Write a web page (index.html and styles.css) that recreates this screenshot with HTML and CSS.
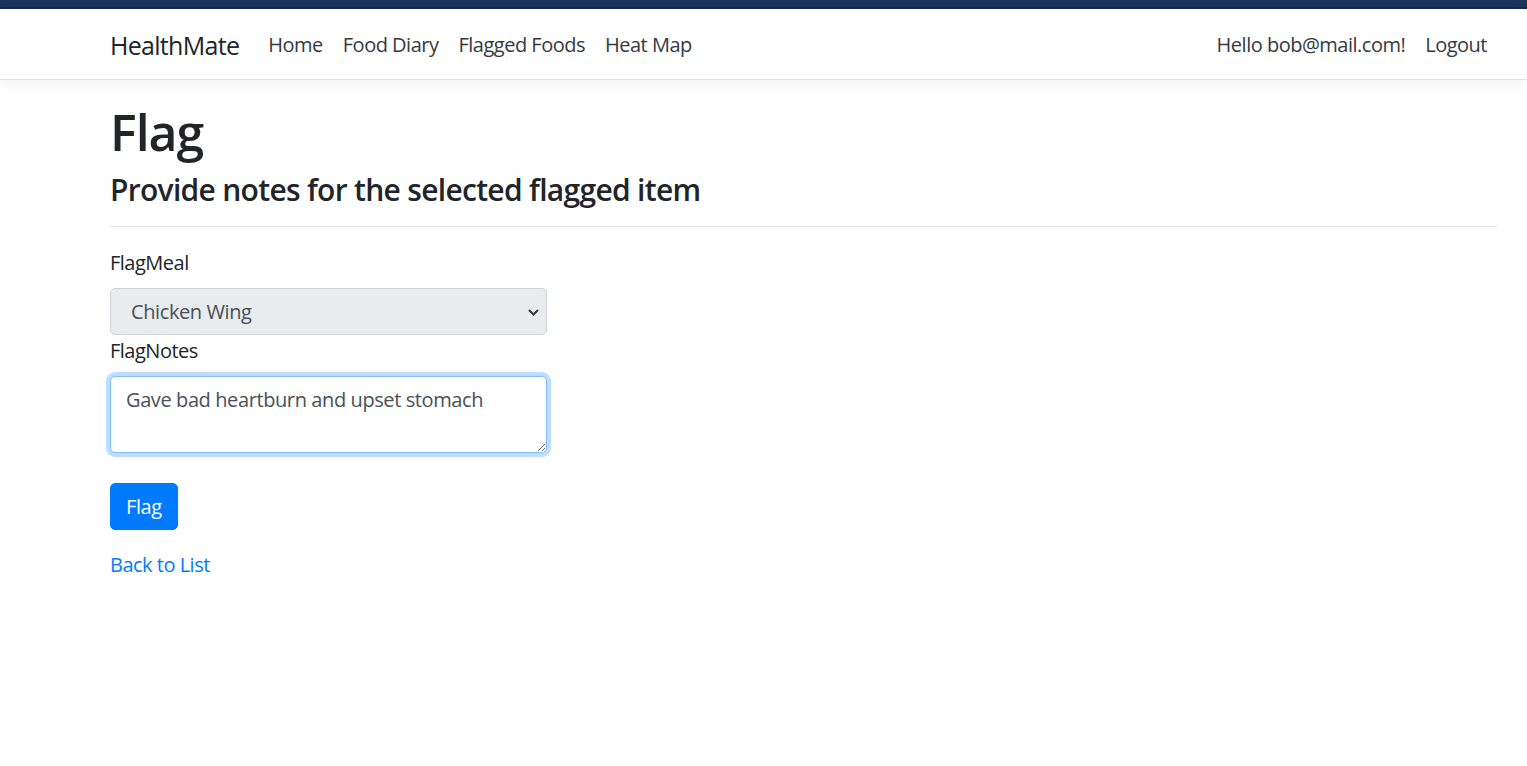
FILE: index.html
```html
<!DOCTYPE html>
<html lang="en">
<head>
<meta charset="utf-8">
<title>Flag - HealthMate</title>
<link rel="stylesheet" href="styles.css">
</head>
<body>
<div class="topbar"></div>
<header class="navbar">
  <div class="container nav-inner">
    <a class="brand" href="#">HealthMate</a>
    <ul class="nav nav-left">
      <li><a class="nav-link" href="#">Home</a></li>
      <li><a class="nav-link" href="#">Food Diary</a></li>
      <li><a class="nav-link" href="#">Flagged Foods</a></li>
      <li><a class="nav-link" href="#">Heat Map</a></li>
    </ul>
    <ul class="nav nav-right">
      <li><a class="nav-link" href="#">Hello bob@mail.com!</a></li>
      <li><a class="nav-link" href="#">Logout</a></li>
    </ul>
  </div>
</header>
<main class="container main">
  <h1 class="title">Flag</h1>
  <h4 class="subtitle">Provide notes for the selected flagged item</h4>
  <hr class="divider">
  <div class="col">
    <form class="form">
      <div class="form-group fields">
        <label class="label" for="meal">FlagMeal</label>
        <div class="select-wrap">
          <select class="control select" id="meal">
            <option>Chicken Wing</option>
          </select>
          <svg class="chevron" width="11" height="7" viewBox="0 0 11 7"><path d="M1 1 L5.5 5.5 L10 1" fill="none" stroke="#3a3a3a" stroke-width="2"/></svg>
        </div>
        <label class="label" for="notes">FlagNotes</label>
        <textarea class="control textarea" id="notes" rows="2">Gave bad heartburn and upset stomach</textarea>
      </div>
      <div class="form-group">
        <button type="button" class="btn">Flag</button>
      </div>
    </form>
  </div>
  <div class="back">
    <a class="link" href="#">Back to List</a>
  </div>
</main>
</body>
</html>
```

FILE: styles.css
```css
* { box-sizing: border-box; }
html, body { margin: 0; padding: 0; }
body {
  font-family: "Open Sans", "Noto Sans", sans-serif;
  font-size: 20px;
  line-height: 30px;
  color: #212529;
  background: #fff;
}
.topbar {
  height: 9px;
  background: #1c3459;
  border-bottom: 2px solid #142848;
}
.container {
  padding-left: 110px;
  padding-right: 30px;
}
.navbar {
  background: #fff;
  border-bottom: 1px solid #dee2e6;
  box-shadow: 0 5px 15px rgba(0, 0, 0, 0.05);
  margin-bottom: 20px;
}
.nav-inner {
  height: 70px;
  display: flex;
  align-items: center;
  padding-top: 2px;
  padding-right: 30px;
}
.brand {
  font-size: 25px;
  line-height: 37px;
  color: #212529;
  text-decoration: none;
  margin-right: 19px;
  letter-spacing: -0.7px;
}
.nav {
  list-style: none;
  margin: 0;
  padding: 0;
  display: flex;
}
.nav-left { flex: 1; }
.nav-right { margin-right: 0; }
.nav-link {
  display: block;
  padding: 7.5px 10px;
  color: #343a40;
  text-decoration: none;
  letter-spacing: -0.5px;
}
.main { padding-top: 2px; padding-bottom: 40px; }
.title {
  font-size: 50px;
  line-height: 60px;
  font-weight: 600;
  margin: 0 0 10px;
  letter-spacing: -1px;
}
.subtitle {
  font-size: 30px;
  line-height: 36px;
  font-weight: 600;
  margin: 0;
  letter-spacing: -0.7px;
}
.divider {
  border: 0;
  border-top: 1px solid rgba(0, 0, 0, 0.1);
  margin: 18px 0 21px;
}
.col { width: 437px; }
.form { margin: 0; }
.form-group { margin-bottom: 20px; }
.fields { margin-bottom: 30px; }
.label {
  display: block;
  margin-bottom: 10px;
  letter-spacing: -0.5px;
}
.select-wrap { position: relative; }
.control {
  display: block;
  width: 100%;
  font-family: inherit;
  font-size: 20px;
  line-height: 30px;
  color: #495057;
  border: 1px solid #ced4da;
  border-radius: 5px;
  padding: 7.5px 15px;
  letter-spacing: -0.4px;
}
.select {
  height: 47px;
  background: #e9ecef;
  appearance: none;
  -webkit-appearance: none;
  padding-left: 20px;
  margin-bottom: 1px;
}
.chevron {
  position: absolute;
  right: 8px;
  top: 21px;
}
.textarea {
  height: 77px;
  resize: vertical;
  background: #fff;
  border-color: #80bdff;
  outline: 0;
  box-shadow: 0 0 0 4px rgba(0, 123, 255, 0.25);
}
.btn {
  font-family: inherit;
  font-size: 20px;
  line-height: 30px;
  color: #fff;
  background: #007bff;
  border: 1px solid #007bff;
  border-radius: 5px;
  padding: 7.5px 15px;
  cursor: pointer;
  letter-spacing: -0.4px;
}
.back { margin-top: 2px; }
.link {
  color: #007bff;
  text-decoration: none;
  letter-spacing: -0.5px;
}
```
